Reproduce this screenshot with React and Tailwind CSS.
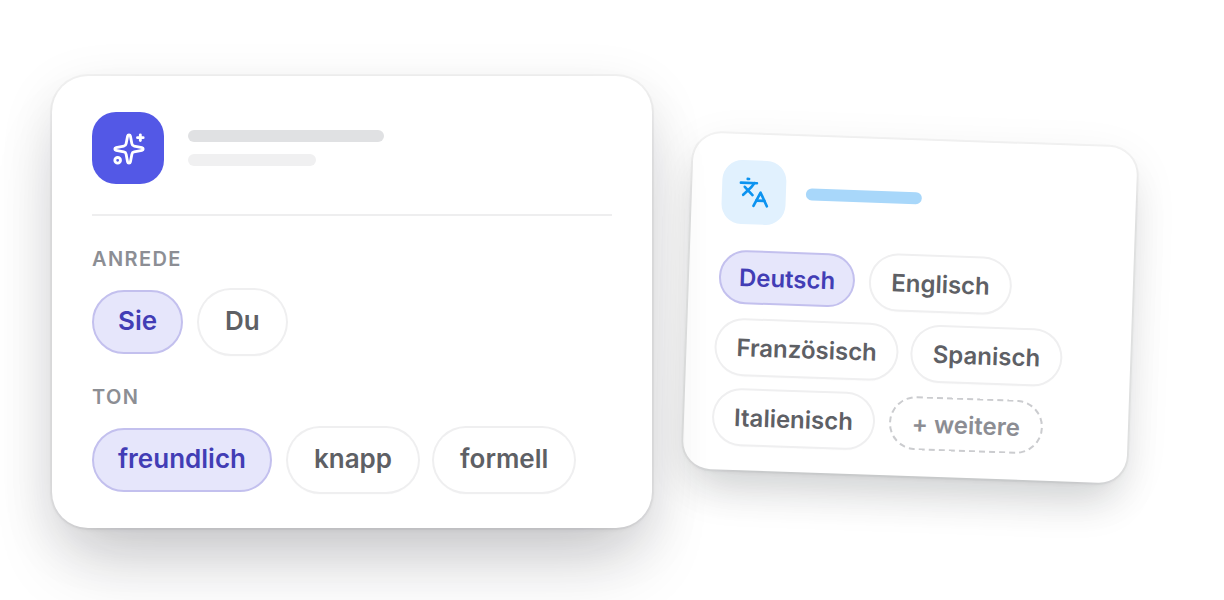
import { Languages, Sparkles } from "lucide-react";
import clsx from "clsx";

function Chip({ children, active, dashed, small }) {
  return (
    <button
      type="button"
      aria-pressed={dashed ? undefined : Boolean(active)}
      className={clsx(
        "rounded-full font-semibold whitespace-nowrap",
        small ? "h-[54px] pt-0.5 text-2xl" : "h-16 pb-1 text-[26px]",
        active && "border-2 border-[#c3c0ee] bg-[#e6e6fb] text-[#423db5]",
        dashed && "border-2 border-dashed border-[#cbcccf] bg-white px-[21px] text-[#8c8d93]",
        !active && !dashed && "bg-white text-[#5e6065] shadow-[0_0_0_2px_#efeff0,0_2px_2px_rgba(0,0,0,0.04)]",
        active && (small ? "px-[18px]" : "px-6"),
        !active && !dashed && (small ? "px-5" : "px-[26px]"),
      )}
    >
      {children}
    </button>
  );
}

function ChipGroup({ label, children }) {
  return (
    <div role="group" aria-label={label}>
      <div className="text-xl leading-[26px] font-semibold tracking-[0.07em] text-[#8c8e94]">{label}</div>
      <div className="mt-[18px] flex flex-wrap gap-4">{children}</div>
    </div>
  );
}

function ToneCard() {
  return (
    <section className="relative z-10 rounded-[36px] bg-white px-10 py-9 shadow-[0_0_0_2px_rgba(20,22,30,0.04),0_2px_4px_rgba(20,22,30,0.05),0_44px_72px_-16px_rgba(20,22,30,0.19),0_16px_56px_rgba(20,22,30,0.10)]">
      <div className="flex items-center gap-6 border-b-2 border-[#eeeeef] pb-[30px]">
        <div className="flex size-[72px] items-center justify-center rounded-3xl bg-[#5358e6] pt-0.5 pl-0.5 text-white">
          <Sparkles size={34} />
        </div>
        <div className="flex flex-col gap-3">
          <div className="h-3 w-[196px] rounded-full bg-[#e0e1e3]" />
          <div className="h-3 w-32 rounded-full bg-[#f0f0f1]" />
        </div>
      </div>
      <div className="mt-[30px] flex flex-col gap-[30px]">
        <ChipGroup label="ANREDE">
          <Chip active>Sie</Chip>
          <Chip>Du</Chip>
        </ChipGroup>
        <ChipGroup label="TON">
          <Chip active>freundlich</Chip>
          <Chip>knapp</Chip>
          <Chip>formell</Chip>
        </ChipGroup>
      </div>
    </section>
  );
}

function LanguageCard() {
  return (
    <section className="mt-16 rotate-2 rounded-[28px] bg-white px-[30px] py-[26px] shadow-[0_0_0_2px_rgba(20,22,30,0.04),0_2px_4px_rgba(20,22,30,0.05),0_28px_44px_-12px_rgba(20,22,30,0.16),0_12px_48px_rgba(20,22,30,0.07)]">
      <div className="flex items-center gap-5">
        <div className="flex size-16 items-center justify-center rounded-[20px] bg-[#e1f1fe] text-[#0c93f0]">
          <Languages size={32} />
        </div>
        <div className="h-3 w-[116px] rounded-full bg-[#a8d7fa]" />
      </div>
      <div className="mt-[26px] flex flex-wrap gap-4">
        <Chip small active>Deutsch</Chip>
        <Chip small>Englisch</Chip>
        <Chip small>Französisch</Chip>
        <Chip small>Spanisch</Chip>
        <Chip small>Italienisch</Chip>
        <Chip small dashed>+ weitere</Chip>
      </div>
    </section>
  );
}

export default function App() {
  return (
    <main className="grid min-h-screen grid-cols-[50fr_37fr] items-start gap-9 overflow-hidden bg-white pt-[76px] pr-[92px] pl-[52px] font-['Inter',sans-serif]">
      <ToneCard />
      <LanguageCard />
    </main>
  );
}
